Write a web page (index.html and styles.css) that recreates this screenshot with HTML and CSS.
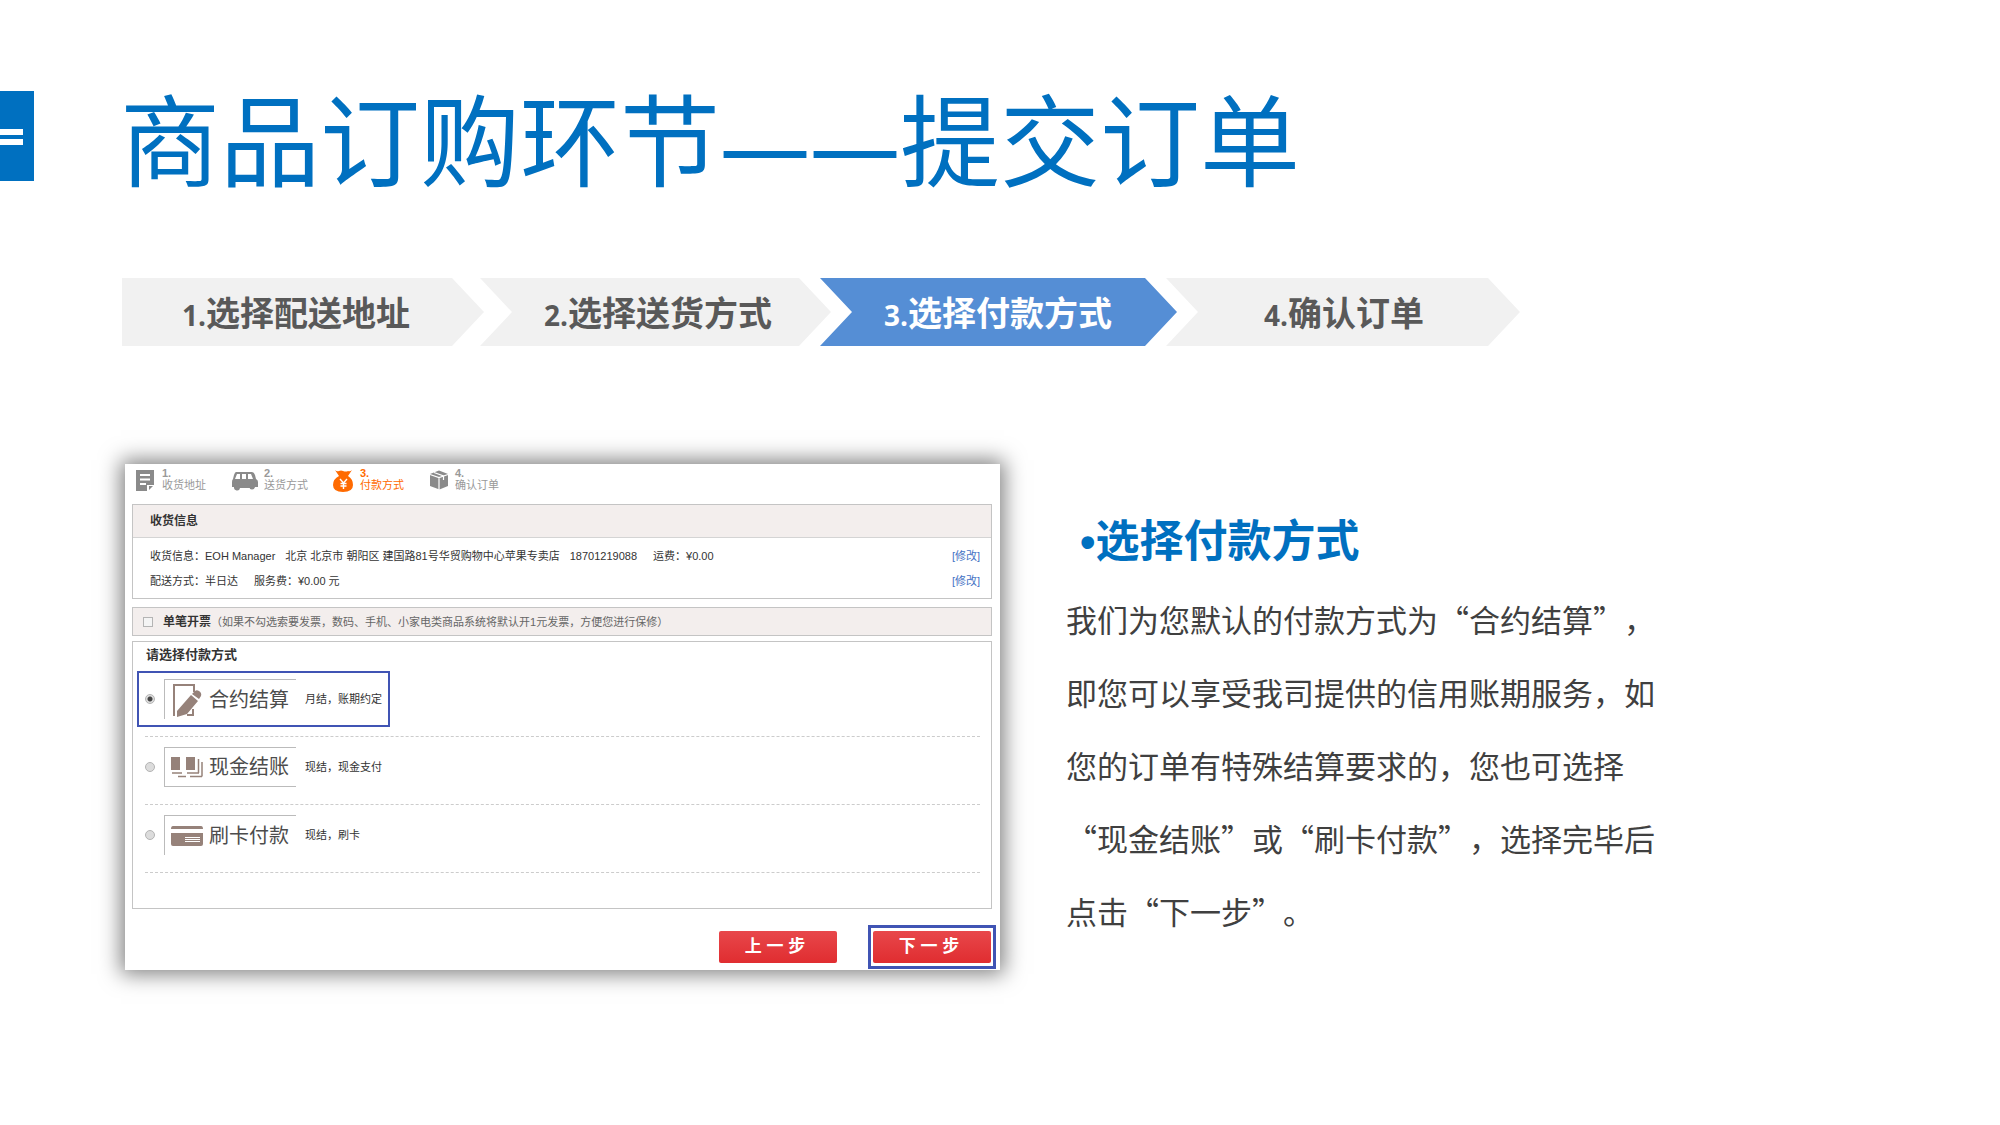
FILE: index.html
```html
<!DOCTYPE html>
<html lang="zh-CN">
<head>
<meta charset="utf-8">
<meta name="viewport" content="width=device-width, initial-scale=1">
<title>商品订购环节——提交订单</title>
<link rel="stylesheet" href="styles.css">
</head>
<body>
<header class="page-header">
  <div class="tab" aria-hidden="true"><span class="tab-line"></span><span class="tab-line"></span></div>
  <h1 class="title">商品订购环节<span class="dash">——</span>提交订单</h1>
</header>

<ol class="steps">
  <li class="step step-first"><span class="num">1.</span>选择配送地址</li>
  <li class="step"><span class="num">2.</span>选择送货方式</li>
  <li class="step step-active" aria-current="step"><span class="num">3.</span>选择付款方式</li>
  <li class="step step-last"><span class="num">4.</span>确认订单</li>
</ol>

<main class="content">
  <form class="panel">
    <ol class="mini">
      <li class="mini-step">
        <svg class="mini-icon" width="20" height="22" viewBox="0 0 20 22"><path fill="#8a8a8a" d="M0 0h18v15l-6 6H0z"/><path stroke="#fff" stroke-width="2" d="M4 5h10M4 9.500h10M4 14h6"/><path fill="#fff" d="M11 21v-6h7v1h-5v5z"/></svg>
        <span class="mini-text"><b class="mini-num">1.</b><span>收货地址</span></span>
      </li>
      <li class="mini-step">
        <svg class="mini-icon" width="27" height="22" viewBox="0 0 27 22"><path fill="#8a8a8a" d="M5 2h16q2 0 3 3l1 4q2 1 2 3v5h-3a3 3 0 0 1-5 1H9a3 3 0 0 1-6-1H1v-5q0-2 1-3l1-4q1-3 2-3z"/><path fill="#fff" d="M6 4h3v5H4zM11 4h4v5h-4zM17 4h3l2 5h-5z"/><circle cx="6" cy="17" r="2.500" fill="#8a8a8a"/><circle cx="21" cy="17" r="2.500" fill="#8a8a8a"/></svg>
        <span class="mini-text"><b class="mini-num">2.</b><span>送货方式</span></span>
      </li>
      <li class="mini-step mini-active">
        <svg class="mini-icon" width="21" height="23" viewBox="0 0 21 23"><path fill="#ff6a00" d="M2 0q2 2 4 1 2-1 4 0 3 1 5 0 2 1 4-1l-4 6q5 3 5 9 0 7-10 7T0 15q0-6 6-9z"/><path fill="none" stroke="#fff" stroke-width="1.400" d="M7 9l3.500 4L14 9M7.500 13.500h6M7.500 16h6M10.500 13v6"/></svg>
        <span class="mini-text"><b class="mini-num">3.</b><span>付款方式</span></span>
      </li>
      <li class="mini-step">
        <svg class="mini-icon" width="20" height="20" viewBox="0 0 20 20"><path fill="#8a8a8a" d="M1 4l9-3.500L19 4v12l-8.500 3.500L1 16z"/><path fill="none" stroke="#fff" stroke-width="1.200" d="M1 4.500l9 3 9-3M10 7.500V20M5 2.500l9.500 3.500v4"/></svg>
        <span class="mini-text"><b class="mini-num">4.</b><span>确认订单</span></span>
      </li>
    </ol>

    <section class="box">
      <h2 class="box-head">收货信息</h2>
      <div class="box-body">
        <div class="info"><span>收货信息：EOH Manager</span><span>北京 北京市 朝阳区 建国路81号华贸购物中心苹果专卖店</span><span>18701219088</span><span class="fee">运费：¥0.00</span><a class="edit" href="#address">[修改]</a></div>
        <div class="info"><span>配送方式：半日达</span><span class="fee">服务费：¥0.00 元</span><a class="edit" href="#delivery">[修改]</a></div>
      </div>
    </section>

    <label class="invoice"><input class="check" type="checkbox"><span><b class="invoice-name">单笔开票</b>（如果不勾选索要发票，数码、手机、小家电类商品系统将默认开1元发票，方便您进行保修）</span></label>

    <fieldset class="pay">
      <legend class="pay-title">请选择付款方式</legend>
      <div class="option">
        <label class="choice choice-on">
          <input class="radio" type="radio" name="pay" checked>
          <span class="brand">
            <svg width="30" height="34" viewBox="0 0 30 34"><path fill="none" stroke="#96827a" stroke-width="2" d="M2 33V2h20v7M21 26v6h-6"/><path fill="#96827a" d="M22 9q2-3 5-1t2 5l-2 3-7-5zM19 12l7 6-11 13-10 3v-6z"/></svg>
            <span>合约结算</span>
          </span>
          <span class="desc">月结，账期约定</span>
        </label>
      </div>
      <div class="option">
        <label class="choice">
          <input class="radio" type="radio" name="pay">
          <span class="brand brand-closed">
            <svg width="32" height="22" viewBox="0 0 32 22"><path fill="#96827a" d="M0 1h9v13H0zM15 1h9v13h-9z"/><path fill="none" stroke="#96827a" stroke-width="1.500" d="M27.500 3v14M1 17h10M16 17h12M31 6v14.500M7 20.500h8M19 20.500h12"/></svg>
            <span>现金结账</span>
          </span>
          <span class="desc">现结，现金支付</span>
        </label>
      </div>
      <div class="option">
        <label class="choice">
          <input class="radio" type="radio" name="pay">
          <span class="brand">
            <svg width="32" height="20" viewBox="0 0 32 20"><path fill="#96827a" d="M2 0h28q2 0 2 3H0q0-3 2-3zM0 7h32v11q0 2-2 2H2q-2 0-2-2z"/><path stroke="#fff" d="M14 11.500h15M14 13.500h15M14 15.500h15"/></svg>
            <span>刷卡付款</span>
          </span>
          <span class="desc">现结，刷卡</span>
        </label>
      </div>
    </fieldset>

    <div class="actions">
      <button class="btn" type="button">上 一 步</button>
      <span class="highlight"><button class="btn" type="button">下 一 步</button></span>
    </div>
  </form>

  <section class="guide">
    <h2 class="guide-title"><span class="bullet">•</span>选择付款方式</h2>
    <p class="guide-text">我们为您默认的付款方式为“合约结算”，<br>即您可以享受我司提供的信用账期服务，如<br>您的订单有特殊结算要求的，您也可选择<br>“现金结账”或“刷卡付款”，选择完毕后<br>点击“下一步”。</p>
  </section>
</main>
</body>
</html>
```
FILE: styles.css
```css
* { box-sizing: border-box; }

body {
  margin: 0;
  background: #fff;
  color: #404040;
  font-family: "Noto Sans CJK SC", sans-serif;
}

h1, h2, p, ol { margin: 0; padding: 0; }
ol { list-style: none; }
svg { display: block; flex: none; }

.page-header {
  display: flex;
  align-items: center;
  gap: 86px;
  padding-top: 76px;
}

.tab {
  width: 34px;
  height: 90px;
  padding-top: 38px;
  display: flex;
  flex-direction: column;
  gap: 4px;
  background: #0070c0;
}

.tab-line { width: 23px; height: 6px; background: #fff; }

.title {
  color: #0070c0;
  font-size: 100px;
  font-weight: 400;
  line-height: 120px;
  white-space: nowrap;
}

.dash { font-family: "Noto Sans", sans-serif; font-size: 90px; line-height: 80px; }

.steps {
  display: grid;
  grid-template-columns: 358fr 340fr 346fr 354fr;
  margin: 82px 24% 0 122px;
}

.step {
  height: 68px;
  margin-right: -11px;
  padding-left: 64px;
  background: #f1f1f1;
  color: #595959;
  font-size: 34px;
  font-weight: 700;
  line-height: 68px;
  white-space: nowrap;
  clip-path: polygon(0 0, calc(100% - 32px) 0, 100% 50%, calc(100% - 32px) 100%, 0 100%, 32px 50%);
}

.step-first {
  margin-right: -4px;
  padding-left: 60px;
  clip-path: polygon(0 0, calc(100% - 32px) 0, 100% 50%, calc(100% - 32px) 100%, 0 100%);
}

.step-active { background: #558ed5; color: #fff; }
.step-last { margin-right: 0; padding-left: 98px; }
.num { font-family: "Open Sans", sans-serif; font-size: 28px; line-height: 40px; }

.content {
  display: grid;
  grid-template-columns: 875fr 1000fr;
  align-items: start;
  padding: 118px 0 60px 125px;
}

.panel {
  padding: 4px 8px 1px 7px;
  background: #fff;
  box-shadow: 0 0 20px 4px rgba(0, 0, 0, 0.5);
  color: #333;
  font-family: "Liberation Sans", "Noto Sans CJK SC", sans-serif;
  font-size: 11px;
  line-height: 14px;
}

.mini { display: flex; gap: 25px; height: 36px; padding-left: 4px; }
.mini-step { display: flex; align-items: flex-start; gap: 6px; color: #999; }
.mini-icon { margin-top: 2px; }
.mini-text { display: flex; flex-direction: column; line-height: 12px; }
.mini-num { line-height: 11px; }
.mini-active { color: #ff6a00; }

.box { border: 1px solid #c4c4c4; }

.box-head {
  height: 33px;
  padding-left: 17px;
  border-bottom: 1px solid #d4d4d4;
  background: #f3eeed;
  font-size: 12px;
  line-height: 32px;
}

.box-body { height: 60px; padding: 6px 11px 4px 17px; }
.info { display: flex; gap: 10px; height: 25px; line-height: 24px; white-space: nowrap; }
.fee { margin-left: 6px; }
.edit { margin-left: auto; color: #4472c4; text-decoration: none; }

.invoice {
  display: flex;
  align-items: center;
  gap: 10px;
  height: 29px;
  margin-top: 8px;
  padding-left: 10px;
  border: 1px solid #c4c4c4;
  background: #f3eeed;
  color: #666;
  white-space: nowrap;
}

.invoice-name { color: #333; font-size: 12px; }

.check, .radio {
  appearance: none;
  flex: none;
  width: 10px;
  height: 10px;
  margin: 0;
  border: 1px solid #b4b4b4;
  background: #f4f4f4;
}

.radio { border-radius: 50%; background: #dcdcdc; }
.radio:checked { background: radial-gradient(circle, #444 0 2px, #ddd 3px); }

.pay {
  min-width: 0;
  height: 268px;
  margin: 5px 0 0;
  padding: 0 11px 0 4px;
  border: 1px solid #c4c4c4;
}

.pay-title {
  float: left;
  width: 100%;
  height: 27px;
  padding: 0 0 0 9px;
  font-size: 13px;
  font-weight: 700;
  line-height: 26px;
}

.option {
  clear: both;
  height: 68px;
  margin-left: 8px;
  padding-top: 2px;
  border-bottom: 1px dashed #ccc;
}

.choice {
  display: inline-flex;
  align-items: center;
  height: 56px;
  margin-left: -8px;
  padding: 0 6px;
  border: 2px solid transparent;
}

.choice-on { border-color: #4054b4; }

.brand {
  display: flex;
  align-items: center;
  gap: 6px;
  width: 132px;
  height: 40px;
  margin: 0 9px;
  padding-left: 6px;
  border: solid #bbb;
  border-width: 1px 0 0 1px;
  color: #4c4c4c;
  font-size: 20px;
  line-height: 24px;
  white-space: nowrap;
}

.brand svg { width: 32px; }
.brand-closed { border-bottom-width: 1px; }
.desc { white-space: nowrap; }

.actions {
  display: flex;
  justify-content: flex-end;
  align-items: center;
  gap: 31px;
  padding-top: 16px;
  margin-right: -4px;
}

.highlight { padding: 3px 2px; border: 3px solid #4054b4; }

.btn {
  display: block;
  width: 118px;
  height: 32px;
  padding: 0 6px 0 0;
  border: 0;
  border-radius: 2px;
  background: linear-gradient(#e8474b, #e02d30);
  color: #fff;
  font: 700 17px/32px "Liberation Sans", "Noto Sans CJK SC", sans-serif;
}

.guide { padding: 42px 20px 0 66px; }

.guide-title {
  padding-left: 14px;
  color: #0070c0;
  font-size: 44px;
  line-height: 64px;
}

.bullet { font-family: "Liberation Sans", sans-serif; line-height: 40px; }

.guide-text {
  margin-top: 12px;
  font-size: 31px;
  font-weight: 400;
  line-height: 73px;
  text-spacing-trim: space-all;
  white-space: nowrap;
}
```
